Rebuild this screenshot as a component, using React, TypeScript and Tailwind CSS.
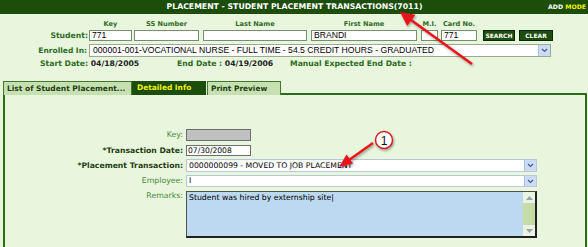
import React from "react";

const green = "text-[#2f6b1f]";
const inp =
  "h-[11px] bg-white border border-[#7d8a74] text-[8.6px] leading-[9px] px-[2px] font-['Liberation_Sans',sans-serif] text-black overflow-hidden whitespace-nowrap";

// top search columns: label, width, gap before, value
const cols = [
  { label: "Key", w: 43, gap: 0, value: "771" },
  { label: "SS Number", w: 65, gap: 2, value: "" },
  { label: "Last Name", w: 104, gap: 4, value: "" },
  { label: "First Name", w: 106, gap: 4, value: "BRANDI" },
  { label: "M.I.", w: 17, gap: 4, value: "" },
  { label: "Card No.", w: 36, gap: 3, value: "771" },
];

function DropBtn() {
  return (
    <div className="w-[12px] h-full bg-[#cbdcf6] border-l border-[#aabfe2] flex items-center justify-center">
      <svg width="7" height="5" viewBox="0 0 7 5">
        <path d="M1 1 L3.5 3.5 L6 1" stroke="#4a5a8a" strokeWidth="1.2" fill="none" />
      </svg>
    </div>
  );
}

export default function App() {
  return (
    <div className="relative w-[588px] h-[247px] overflow-hidden bg-[#e7f6dd] font-['DejaVu_Sans',sans-serif]">
      {/* header */}
      <div className="h-[14px] bg-[#1c4d0b] flex items-center relative">
        <div className="flex-1 text-center text-white font-bold text-[7.75px] leading-none whitespace-nowrap pl-[1px]">
          PLACEMENT - STUDENT PLACEMENT TRANSACTIONS(7011)
        </div>
        <div className="absolute left-[548px] top-[4px] text-[6.2px] font-bold leading-none whitespace-nowrap">
          <span className="text-white">ADD</span> <span className="text-[#f2f000]">MODE</span>
        </div>
      </div>

      {/* column labels */}
      <div className="flex h-[16px] items-center pt-[4px] pl-[89px]">
        {cols.map((c) => (
          <div
            key={c.label}
            style={{ width: c.w, marginLeft: c.gap }}
            className={`text-center text-[6.6px] font-bold leading-none whitespace-nowrap ${green}`}
          >
            {c.label}
          </div>
        ))}
      </div>

      {/* student row */}
      <div className="flex items-center h-[11px]">
        <div className={`w-[89px] text-right pr-[1px] text-[7.7px] font-bold leading-none whitespace-nowrap ${green}`}>Student:</div>
        {cols.map((c) => (
          <div key={c.label} style={{ width: c.w, marginLeft: c.gap }} className={inp}>
            {c.value}
          </div>
        ))}
        <div className="w-[32px] h-[11px] ml-[6px] bg-[#1c4d0b] border border-[#0b2704] text-white text-[6px] font-bold leading-none flex items-center justify-center whitespace-nowrap">SEARCH</div>
        <div className="w-[34px] h-[11px] ml-[4px] bg-[#1c4d0b] border border-[#0b2704] text-white text-[6px] font-bold leading-none flex items-center justify-center whitespace-nowrap">CLEAR</div>
      </div>

      {/* enrolled */}
      <div className="flex items-center mt-[3px] h-[13px]">
        <div className={`w-[89px] text-right pr-[2px] text-[7.5px] font-bold leading-none whitespace-nowrap ${green}`}>Enrolled In:</div>
        <div className="w-[462px] h-[13px] bg-white border border-[#9aaa90] flex items-center">
          <div className="flex-1 pl-[3px] text-[8.65px] font-['Liberation_Sans',sans-serif] text-black whitespace-nowrap overflow-hidden leading-none">
            000001-001-VOCATIONAL NURSE - FULL TIME - 54.5 CREDIT HOURS - GRADUATED
          </div>
          <DropBtn />
        </div>
      </div>

      {/* dates */}
      <div className="flex items-center h-[14px] pl-[40px] text-[7.7px] font-bold leading-none whitespace-nowrap">
        <div className="w-[137px]">
          <span className={green}>Start Date:</span> <span className="text-[#222]">04/18/2005</span>
        </div>
        <div className="w-[113px]">
          <span className={green}>End Date :</span> <span className="text-[#222]">04/19/2006</span>
        </div>
        <div className={green}>Manual Expected End Date :</div>
      </div>

      {/* tabs */}
      <div className="flex mt-[10px] pl-[3px] h-[14px] items-stretch whitespace-nowrap">
        <div className="w-[129px] bg-[#c6e0b2] border border-[#3f7a2a] border-b-0 text-[7.5px] font-bold text-[#1f3d12] pl-[3px] flex items-center leading-none">List of Student Placement...</div>
        <div className="w-[74px] bg-[#1c4d0b] text-[7.45px] font-bold text-[#f2f000] pl-[5px] flex items-center leading-none">Detailed Info</div>
        <div className="w-[74px] ml-[1px] bg-[#c6e0b2] border border-[#3f7a2a] border-b-0 text-[7.4px] font-bold text-[#1f3d12] pl-[3px] flex items-center leading-none">Print Preview</div>
        <div className="flex-1 mr-[1px] border-b-[2px] border-[#2f6a1d]" />
      </div>

      {/* panel */}
      <div className="ml-[3px] mr-[1px] h-[160px] border-l-[2px] border-r-[2px] border-[#2f6a1d] pt-[34px]">
        <div className="flex items-center h-[12px]">
          <div className="w-[181px] text-right pr-[3px] text-[7.8px] text-[#4d8a3a] leading-none">Key:</div>
          <div className="w-[65px] h-[12px] bg-[#c0c0c0] border border-[#6e6e6e]" />
        </div>
        <div className="flex items-center h-[11px] mt-[4px]">
          <div className="w-[181px] text-right pr-[3px] text-[7.7px] font-bold text-[#1f3d12] leading-none whitespace-nowrap">*Transaction Date:</div>
          <div className="w-[65px] h-[11px] bg-white border border-[#6e6e6e] text-[7.6px] leading-[9px] px-[1px] text-black">07/30/2008</div>
        </div>
        <div className="flex items-center h-[13px] mt-[3px]">
          <div className="w-[181px] text-right pr-[3px] text-[7.7px] font-bold text-[#1f3d12] leading-none whitespace-nowrap">*Placement Transaction:</div>
          <div className="w-[351px] h-[13px] bg-white border border-[#b8c8d8] flex items-center">
            <div className="flex-1 pl-[2px] text-[7.7px] leading-none text-black whitespace-nowrap">0000000099 - MOVED TO JOB PLACEMENT</div>
            <DropBtn />
          </div>
        </div>
        <div className="flex items-center h-[12px] mt-[3px]">
          <div className="w-[181px] text-right pr-[3px] text-[7.8px] text-[#4d8a3a] leading-none">Employee:</div>
          <div className="w-[351px] h-[12px] bg-white border border-[#b8c8d8] flex items-center">
            <div className="flex-1 pl-[2px] text-[7.7px] leading-none text-black">I</div>
            <DropBtn />
          </div>
        </div>
        <div className="flex items-start mt-[4px]">
          <div className="w-[181px] text-right pr-[3px] text-[7.8px] text-[#4d8a3a] leading-none pt-[1px]">Remarks:</div>
          <div className="w-[351px] h-[47px] bg-[#bcd9f1] border border-[#505050] border-r-[2px] border-b-[2px] border-r-[#202020] border-b-[#202020] flex">
            <div className="flex-1 pl-[2px] pt-[2px] text-[7.75px] leading-none text-black whitespace-nowrap">Student was hired by externship site|</div>
            <div className="w-[12px] flex flex-col bg-[#c5dca6]">
              <div className="h-[11px] bg-[#eaf4e0] flex items-center justify-center">
                <svg width="7" height="4" viewBox="0 0 7 4"><path d="M0 4 L3.5 0 L7 4Z" fill="#9aa0b0" /></svg>
              </div>
              <div className="flex-1" />
              <div className="h-[11px] bg-[#eaf4e0] flex items-center justify-center">
                <svg width="7" height="4" viewBox="0 0 7 4"><path d="M0 0 L3.5 4 L7 0Z" fill="#9aa0b0" /></svg>
              </div>
            </div>
          </div>
        </div>
      </div>

      {/* annotations */}
      <svg className="absolute left-0 top-0 pointer-events-none" width="588" height="247" viewBox="0 0 588 247">
        <defs>
          <filter id="sh" x="-20%" y="-20%" width="140%" height="140%">
            <feDropShadow dx="1" dy="1.5" stdDeviation="1" floodColor="#000" floodOpacity="0.35" />
          </filter>
        </defs>
        <g filter="url(#sh)">
          <line x1="472" y1="64" x2="411" y2="20" stroke="#e8161a" strokeWidth="2.5" />
          <path d="M400 12 L415.5 14.8 L407.2 26 Z" fill="#e8161a" />
          <line x1="373" y1="143" x2="349" y2="160" stroke="#e8161a" strokeWidth="2.5" />
          <path d="M339 167 L346.5 154.5 L353 163.5 Z" fill="#e8161a" />
          <circle cx="384" cy="140" r="8.5" fill="#fff" stroke="#d81e1e" strokeWidth="1.5" />
        </g>
        <text x="384" y="144.5" textAnchor="middle" fontSize="12" fontFamily="Liberation Sans, sans-serif" fill="#111">1</text>
      </svg>
    </div>
  );
}
